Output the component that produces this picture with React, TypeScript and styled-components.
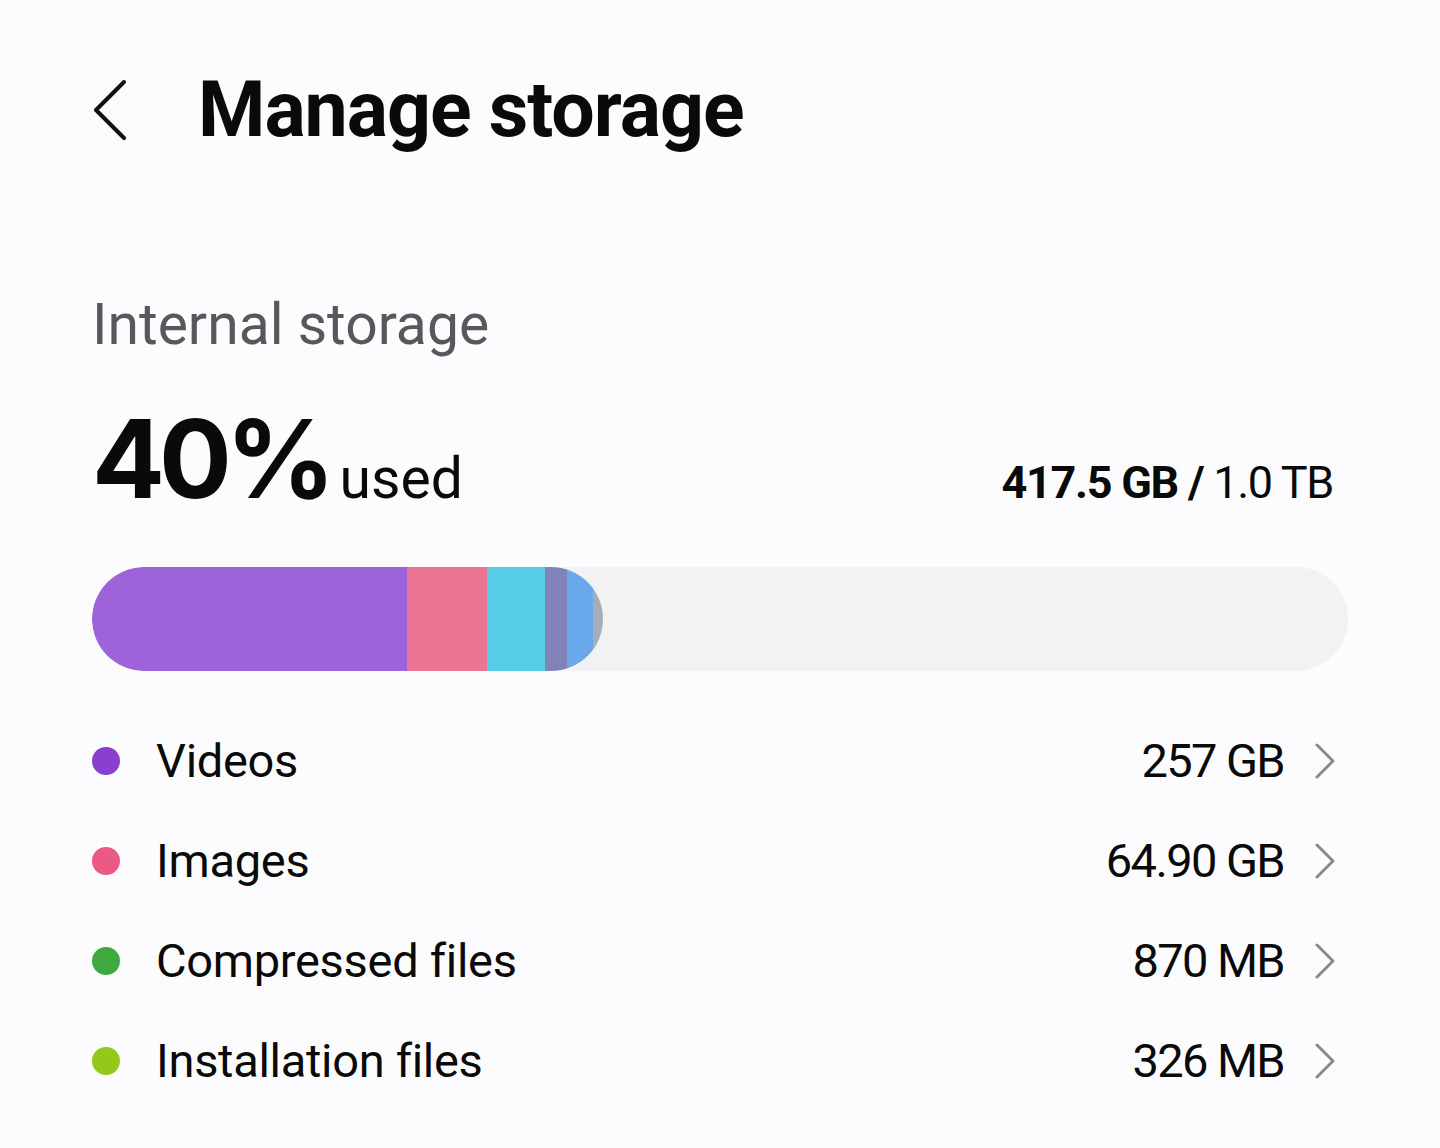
import { createGlobalStyle } from 'styled-components';
import styled from 'styled-components';

const GlobalStyle = createGlobalStyle`
  html, body {
    margin: 0;
    padding: 0;
    background: #fcfcfe;
  }
  body {
    font-family: Roboto, "Noto Sans", "Liberation Sans", sans-serif;
    color: #0a0a0a;
  }
`;

const Page = styled.div`
  width: 1440px;
  min-height: 1148px;
  box-sizing: border-box;
  padding: 64px 92px 0;
`;

const Header = styled.header`
  display: flex;
  align-items: center;
  height: 92px;
`;

const BackButton = styled.button`
  display: flex;
  align-items: center;
  justify-content: center;
  width: 34px;
  height: 62px;
  padding: 0;
  border: 0;
  background: none;
  cursor: pointer;
`;

const Title = styled.h1`
  margin: 0 0 0 72px;
  font-size: 77px;
  font-weight: 700;
  line-height: 1.2;
  letter-spacing: -1px;
`;

const SectionLabel = styled.h2`
  margin: 135px 0 0;
  font-size: 57px;
  font-weight: 400;
  line-height: 1.2;
  color: #58585c;
`;

const StatsRow = styled.div`
  display: flex;
  align-items: baseline;
  justify-content: space-between;
  margin-top: 35px;
`;

const Percent = styled.span`
  font-family: Inter, Roboto, sans-serif;
  font-size: 108px;
  font-weight: 700;
  line-height: 1.2;
  letter-spacing: -6px;
`;

const Used = styled.span`
  margin-left: 10px;
  font-size: 57px;
  font-weight: 400;
`;

const Capacity = styled.span`
  margin-right: 15px;
  font-size: 45px;
  font-weight: 400;
  letter-spacing: -1.3px;

  b {
    font-weight: 700;
  }
`;

const Track = styled.div`
  margin-top: 43px;
  height: 104px;
  border-radius: 52px;
  background: #f2f2f2;
  overflow: hidden;
`;

const UsedBar = styled.div`
  display: flex;
  height: 100%;
  border-radius: 52px;
  overflow: hidden;
`;

const Segment = styled.div<{ $color: string }>`
  flex: none;
  height: 100%;
  background: ${({ $color }) => $color};
`;

const List = styled.ul`
  list-style: none;
  margin: 40px 0 0;
  padding: 0;
`;

const Row = styled.li`
  display: flex;
  align-items: center;
  height: 100px;
  font-size: 47px;
`;

const Dot = styled.span<{ $color: string }>`
  flex: none;
  width: 28px;
  height: 28px;
  border-radius: 50%;
  background: ${({ $color }) => $color};
`;

const Label = styled.span`
  flex: 1;
  margin-left: 36px;
  letter-spacing: -0.3px;
`;

const Value = styled.span`
  text-align: right;
  letter-spacing: -1.6px;
`;

const Chevron = styled.svg`
  flex: none;
  margin: 0 13px 0 31px;
`;

const segments = [
  { color: '#9e62d9', width: 315 },
  { color: '#ec7596', width: 80 },
  { color: '#58cde6', width: 58 },
  { color: '#8083b8', width: 22 },
  { color: '#6aa8ec', width: 26 },
  { color: '#a9adb8', width: 10 },
];

const categories = [
  { label: 'Videos', size: '257 GB', color: '#8a3fd1' },
  { label: 'Images', size: '64.90 GB', color: '#eb5a85' },
  { label: 'Compressed files', size: '870 MB', color: '#3fa93f' },
  { label: 'Installation files', size: '326 MB', color: '#92c91a' },
];

export default function App() {
  const usedWidth = segments.reduce((sum, s) => sum + s.width, 0);

  return (
    <>
      <GlobalStyle />
      <Page>
        <Header>
          <BackButton aria-label="Back">
            <svg width="34" height="62" viewBox="0 0 34 62" fill="none">
              <path
                d="M32 3 L4 31 L32 59"
                stroke="#111"
                strokeWidth="4"
                strokeLinecap="round"
                strokeLinejoin="round"
              />
            </svg>
          </BackButton>
          <Title>Manage storage</Title>
        </Header>

        <SectionLabel>Internal storage</SectionLabel>

        <StatsRow>
          <div>
            <Percent>40%</Percent>
            <Used>used</Used>
          </div>
          <Capacity>
            <b>417.5 GB /</b> 1.0 TB
          </Capacity>
        </StatsRow>

        <Track>
          <UsedBar style={{ width: usedWidth }}>
            {segments.map((s) => (
              <Segment key={s.color} $color={s.color} style={{ width: s.width }} />
            ))}
          </UsedBar>
        </Track>

        <List>
          {categories.map((c) => (
            <Row key={c.label}>
              <Dot $color={c.color} />
              <Label>{c.label}</Label>
              <Value>{c.size}</Value>
              <Chevron width="20" height="36" viewBox="0 0 20 36" fill="none">
                <path
                  d="M2 2 L18 18 L2 34"
                  stroke="#8a8a8a"
                  strokeWidth="3"
                  strokeLinecap="round"
                  strokeLinejoin="round"
                />
              </Chevron>
            </Row>
          ))}
        </List>
      </Page>
    </>
  );
}
